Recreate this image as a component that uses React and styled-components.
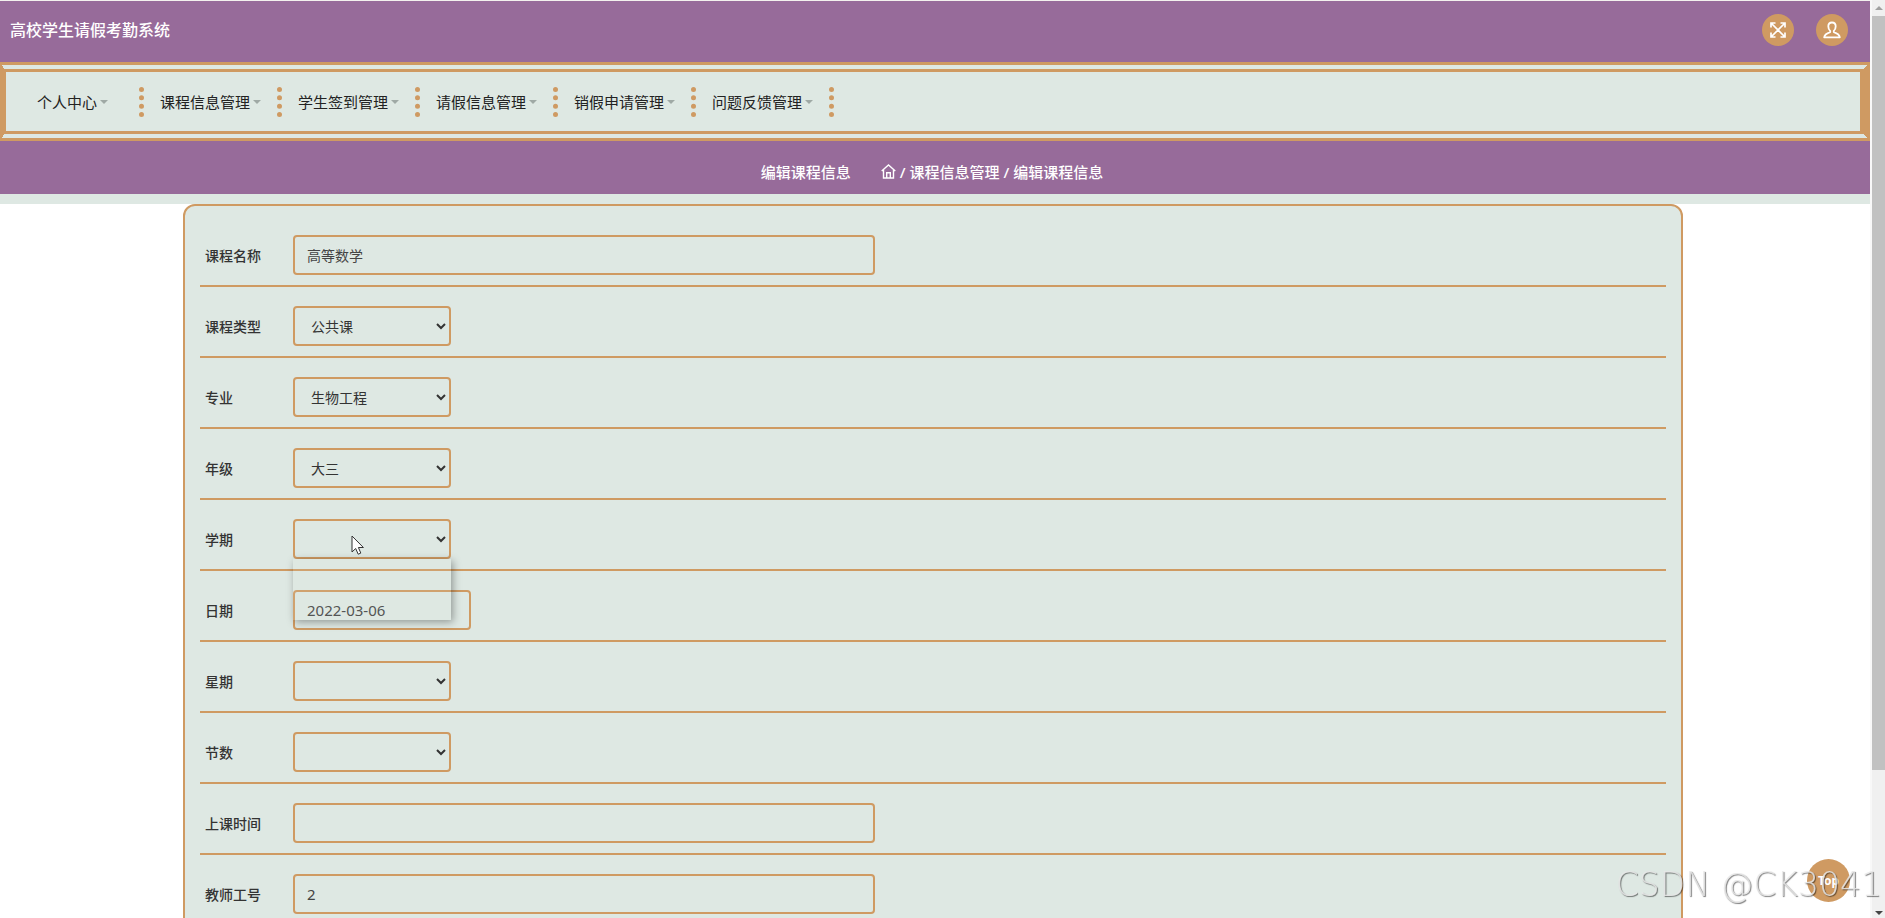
import React from "react"
import styled, { createGlobalStyle } from "styled-components"

const colors = {
  purple: "#976b9a",
  orange: "#cf9a62",
  mint: "#dee8e3",
  text: "#333",
}

const GlobalStyle = createGlobalStyle`
  * {
    box-sizing: border-box;
  }
  body {
    margin: 0;
    background: #fff;
    color: ${colors.text};
    font-family: "Noto Sans", "Noto Sans CJK SC", sans-serif;
    font-size: 14px;
  }
  button, input, select {
    font-family: inherit;
  }
`

const Viewport = styled.div`
  display: flex;
  height: 100vh;
  overflow: hidden;
`
const Content = styled.div`
  flex: 1;
  min-width: 0;
  overflow: hidden;
`
const Header = styled.header`
  display: flex;
  justify-content: space-between;
  align-items: center;
  padding: 13px 22px 16px 10px;
  border-top: 1px solid #f3f1ee;
  background: ${colors.purple};
`
const SiteTitle = styled.h1`
  margin: 0;
  color: #fff;
  font-size: 16px;
  font-weight: 500;
  line-height: 24px;
`
const Actions = styled.div`
  display: flex;
  gap: 22px;
`
const RoundButton = styled.button`
  display: flex;
  align-items: center;
  justify-content: center;
  width: 32px;
  height: 32px;
  padding: 0;
  border: 0;
  border-radius: 50%;
  background: ${colors.orange};
  color: #fff;
`
const Nav = styled.nav`
  display: flex;
  align-items: center;
  height: 79px;
  border: 10px double ${colors.orange};
  border-left: 6px solid ${colors.orange};
  border-right: 10px solid ${colors.orange};
  background: ${colors.mint};
`
const NavItem = styled.button`
  display: flex;
  align-items: center;
  justify-content: center;
  gap: 3px;
  width: 138px;
  height: 30px;
  padding: 0;
  border: 0;
  border-right: 5px dotted ${colors.orange};
  background: none;
  color: #222;
  font-size: 15px;
`
const Caret = styled.span`
  border: 4px solid transparent;
  border-top-color: #9fa9a5;
  border-bottom: 0;
`
const Banner = styled.div`
  display: flex;
  align-items: center;
  justify-content: center;
  gap: 30px;
  height: 53px;
  padding: 8px 6px 0 0;
  background: ${colors.purple};
  color: #fff;
  font-size: 15px;
  font-weight: 500;
`
const Crumbs = styled.div`
  display: flex;
  align-items: center;
  gap: 4px;
  a {
    display: flex;
    color: inherit;
    text-decoration: none;
  }
`
const Strip = styled.div`
  height: 10px;
  background: ${colors.mint};
`
const Form = styled.form`
  margin: 0 187px 0 183px;
  padding: 10px 15px;
  border: 2px solid ${colors.orange};
  border-radius: 12px;
  background: ${colors.mint};
`
const Row = styled.div`
  display: flex;
  align-items: center;
  padding: 19px 5px 10px;
  border-bottom: 2px solid ${colors.orange};
`
const Label = styled.label`
  width: 88px;
  font-weight: 500;
`
const Control = styled.div`
  position: relative;
  display: flex;
`
const Input = styled.input`
  width: ${props => (props.$short ? 178 : 582)}px;
  height: 40px;
  padding: 0 12px;
  border: 2px solid ${colors.orange};
  border-radius: 4px;
  outline: 0;
  background: transparent;
  color: #444;
  font-size: ${props => (props.$numeric ? 15 : 14)}px;
`
const Select = styled.select`
  width: 158px;
  height: 40px;
  padding: 0 12px;
  border: 2px solid ${colors.orange};
  border-radius: 4px;
  outline: 0;
  background: transparent;
  color: #333;
  font-size: 14px;
`
const Menu = styled.div`
  position: absolute;
  z-index: 1;
  top: 100%;
  left: 0;
  width: 100%;
  height: 61px;
  background: rgba(222, 232, 227, 0.1);
  box-shadow: 2px 2px 8px rgba(0, 0, 0, 0.35);
`
const Pointer = styled.svg`
  position: absolute;
  z-index: 2;
  top: 16px;
  left: 58px;
`
const TopButton = styled.button`
  position: fixed;
  right: 35px;
  bottom: 16px;
  width: 43px;
  height: 43px;
  padding: 0;
  border: 0;
  border-radius: 50%;
  background: ${colors.orange};
  color: #fff;
  font-size: 12px;
  font-weight: bold;
`
const Watermark = styled.div`
  position: fixed;
  right: 3px;
  bottom: 11px;
  color: rgba(232, 232, 232, 0.85);
  font-family: "DejaVu Sans", sans-serif;
  font-size: 33px;
  font-weight: 200;
  line-height: 44px;
  text-shadow: 1px 1px 1px rgba(0, 0, 0, 0.5);
  pointer-events: none;
`
const ScrollBar = styled.div`
  display: flex;
  flex-direction: column;
  align-items: center;
  width: 15px;
  padding: 6px 0 3px;
  border-left: 2px solid #f8f8f8;
  background: #f0f0f0;
`
const Thumb = styled.div`
  flex: 755;
  align-self: stretch;
  margin-top: 6px;
  background: #c1c1c1;
`
const Track = styled.div`
  flex: 141;
`
const Arrow = styled.span`
  border: 4px solid transparent;
  ${props =>
    props.$up
      ? "border-top: 0; border-bottom-color: #a0a0a0;"
      : "border-bottom: 0; border-top-color: #444;"}
`

const menus = [
  "个人中心",
  "课程信息管理",
  "学生签到管理",
  "请假信息管理",
  "销假申请管理",
  "问题反馈管理",
]

const fields = [
  { id: "name", label: "课程名称", value: "高等数学" },
  { id: "type", label: "课程类型", select: true, value: "公共课" },
  { id: "major", label: "专业", select: true, value: "生物工程" },
  { id: "grade", label: "年级", select: true, value: "大三" },
  { id: "term", label: "学期", select: true, value: "", open: true },
  { id: "date", label: "日期", value: "2022-03-06", short: true, numeric: true },
  { id: "weekday", label: "星期", select: true, value: "" },
  { id: "section", label: "节数", select: true, value: "" },
  { id: "time", label: "上课时间", value: "" },
  { id: "teacher", label: "教师工号", value: "2", numeric: true },
]

const ExpandIcon = () => (
  <svg width="16" height="16" viewBox="0 0 16 16" fill="none" stroke="currentColor" strokeWidth="1.7">
    <path d="M1 5.500V1h4.500M10.500 1H15v4.500M15 10.500V15h-4.500M5.500 15H1v-4.500M1 1l14 14M15 1L1 15" />
  </svg>
)

const UserIcon = () => (
  <svg width="18" height="18" viewBox="0 0 18 18" fill="none" stroke="currentColor" strokeWidth="1.8" strokeLinejoin="round">
    <path d="M9 1.500C6.700 1.500 5.300 3 5.300 5.300c0 2 .7 3.600 1.900 4.600v1.200C4.500 12 1.500 13 1.200 16.300h15.600C16.500 13 13.500 12 10.800 11.100V9.900c1.200-1 1.900-2.600 1.900-4.600C12.700 3 11.300 1.500 9 1.500z" />
  </svg>
)

const HomeIcon = () => (
  <svg width="15" height="15" viewBox="0 0 15 15" fill="none" stroke="currentColor" strokeWidth="1.4">
    <path d="M.7 7L7.500 1l6.800 6M2.500 5.800V14h10V5.800M5.700 14V8.800h3.600V14" />
  </svg>
)

const Field = ({ field }) => (
  <Row>
    <Label htmlFor={field.id}>{field.label}</Label>
    <Control>
      {field.select ? (
        <Select id={field.id} defaultValue={field.value}>
          <option value={field.value}>{field.value}</option>
        </Select>
      ) : (
        <Input
          id={field.id}
          type="text"
          defaultValue={field.value}
          $short={field.short}
          $numeric={field.numeric}
        />
      )}
      {field.open && (
        <>
          <Menu />
          <Pointer width="14" height="20" viewBox="0 0 14 20">
            <path
              d="M1 1v16l3.700-3.500 2.500 5.700 2.600-1.100-2.400-5.600h5L1 1z"
              fill="#fff"
              stroke="#333"
            />
          </Pointer>
        </>
      )}
    </Control>
  </Row>
)

const App = () => (
  <>
    <GlobalStyle />
    <Viewport>
      <Content>
        <Header>
          <SiteTitle>高校学生请假考勤系统</SiteTitle>
          <Actions>
            <RoundButton type="button" aria-label="全屏">
              <ExpandIcon />
            </RoundButton>
            <RoundButton type="button" aria-label="用户">
              <UserIcon />
            </RoundButton>
          </Actions>
        </Header>
        <Nav>
          {menus.map(name => (
            <NavItem type="button" key={name}>
              {name}
              <Caret />
            </NavItem>
          ))}
        </Nav>
        <Banner>
          <span>编辑课程信息</span>
          <Crumbs>
            <a href="#home" aria-label="首页">
              <HomeIcon />
            </a>
            <span>/</span>
            <a href="#courses">课程信息管理</a>
            <span>/</span>
            <span>编辑课程信息</span>
          </Crumbs>
        </Banner>
        <Strip />
        <Form>
          {fields.map(field => (
            <Field key={field.id} field={field} />
          ))}
        </Form>
      </Content>
      <ScrollBar>
        <Arrow $up />
        <Thumb />
        <Track />
        <Arrow />
      </ScrollBar>
    </Viewport>
    <TopButton type="button">Top</TopButton>
    <Watermark>CSDN @CK3041</Watermark>
  </>
)

export default App
